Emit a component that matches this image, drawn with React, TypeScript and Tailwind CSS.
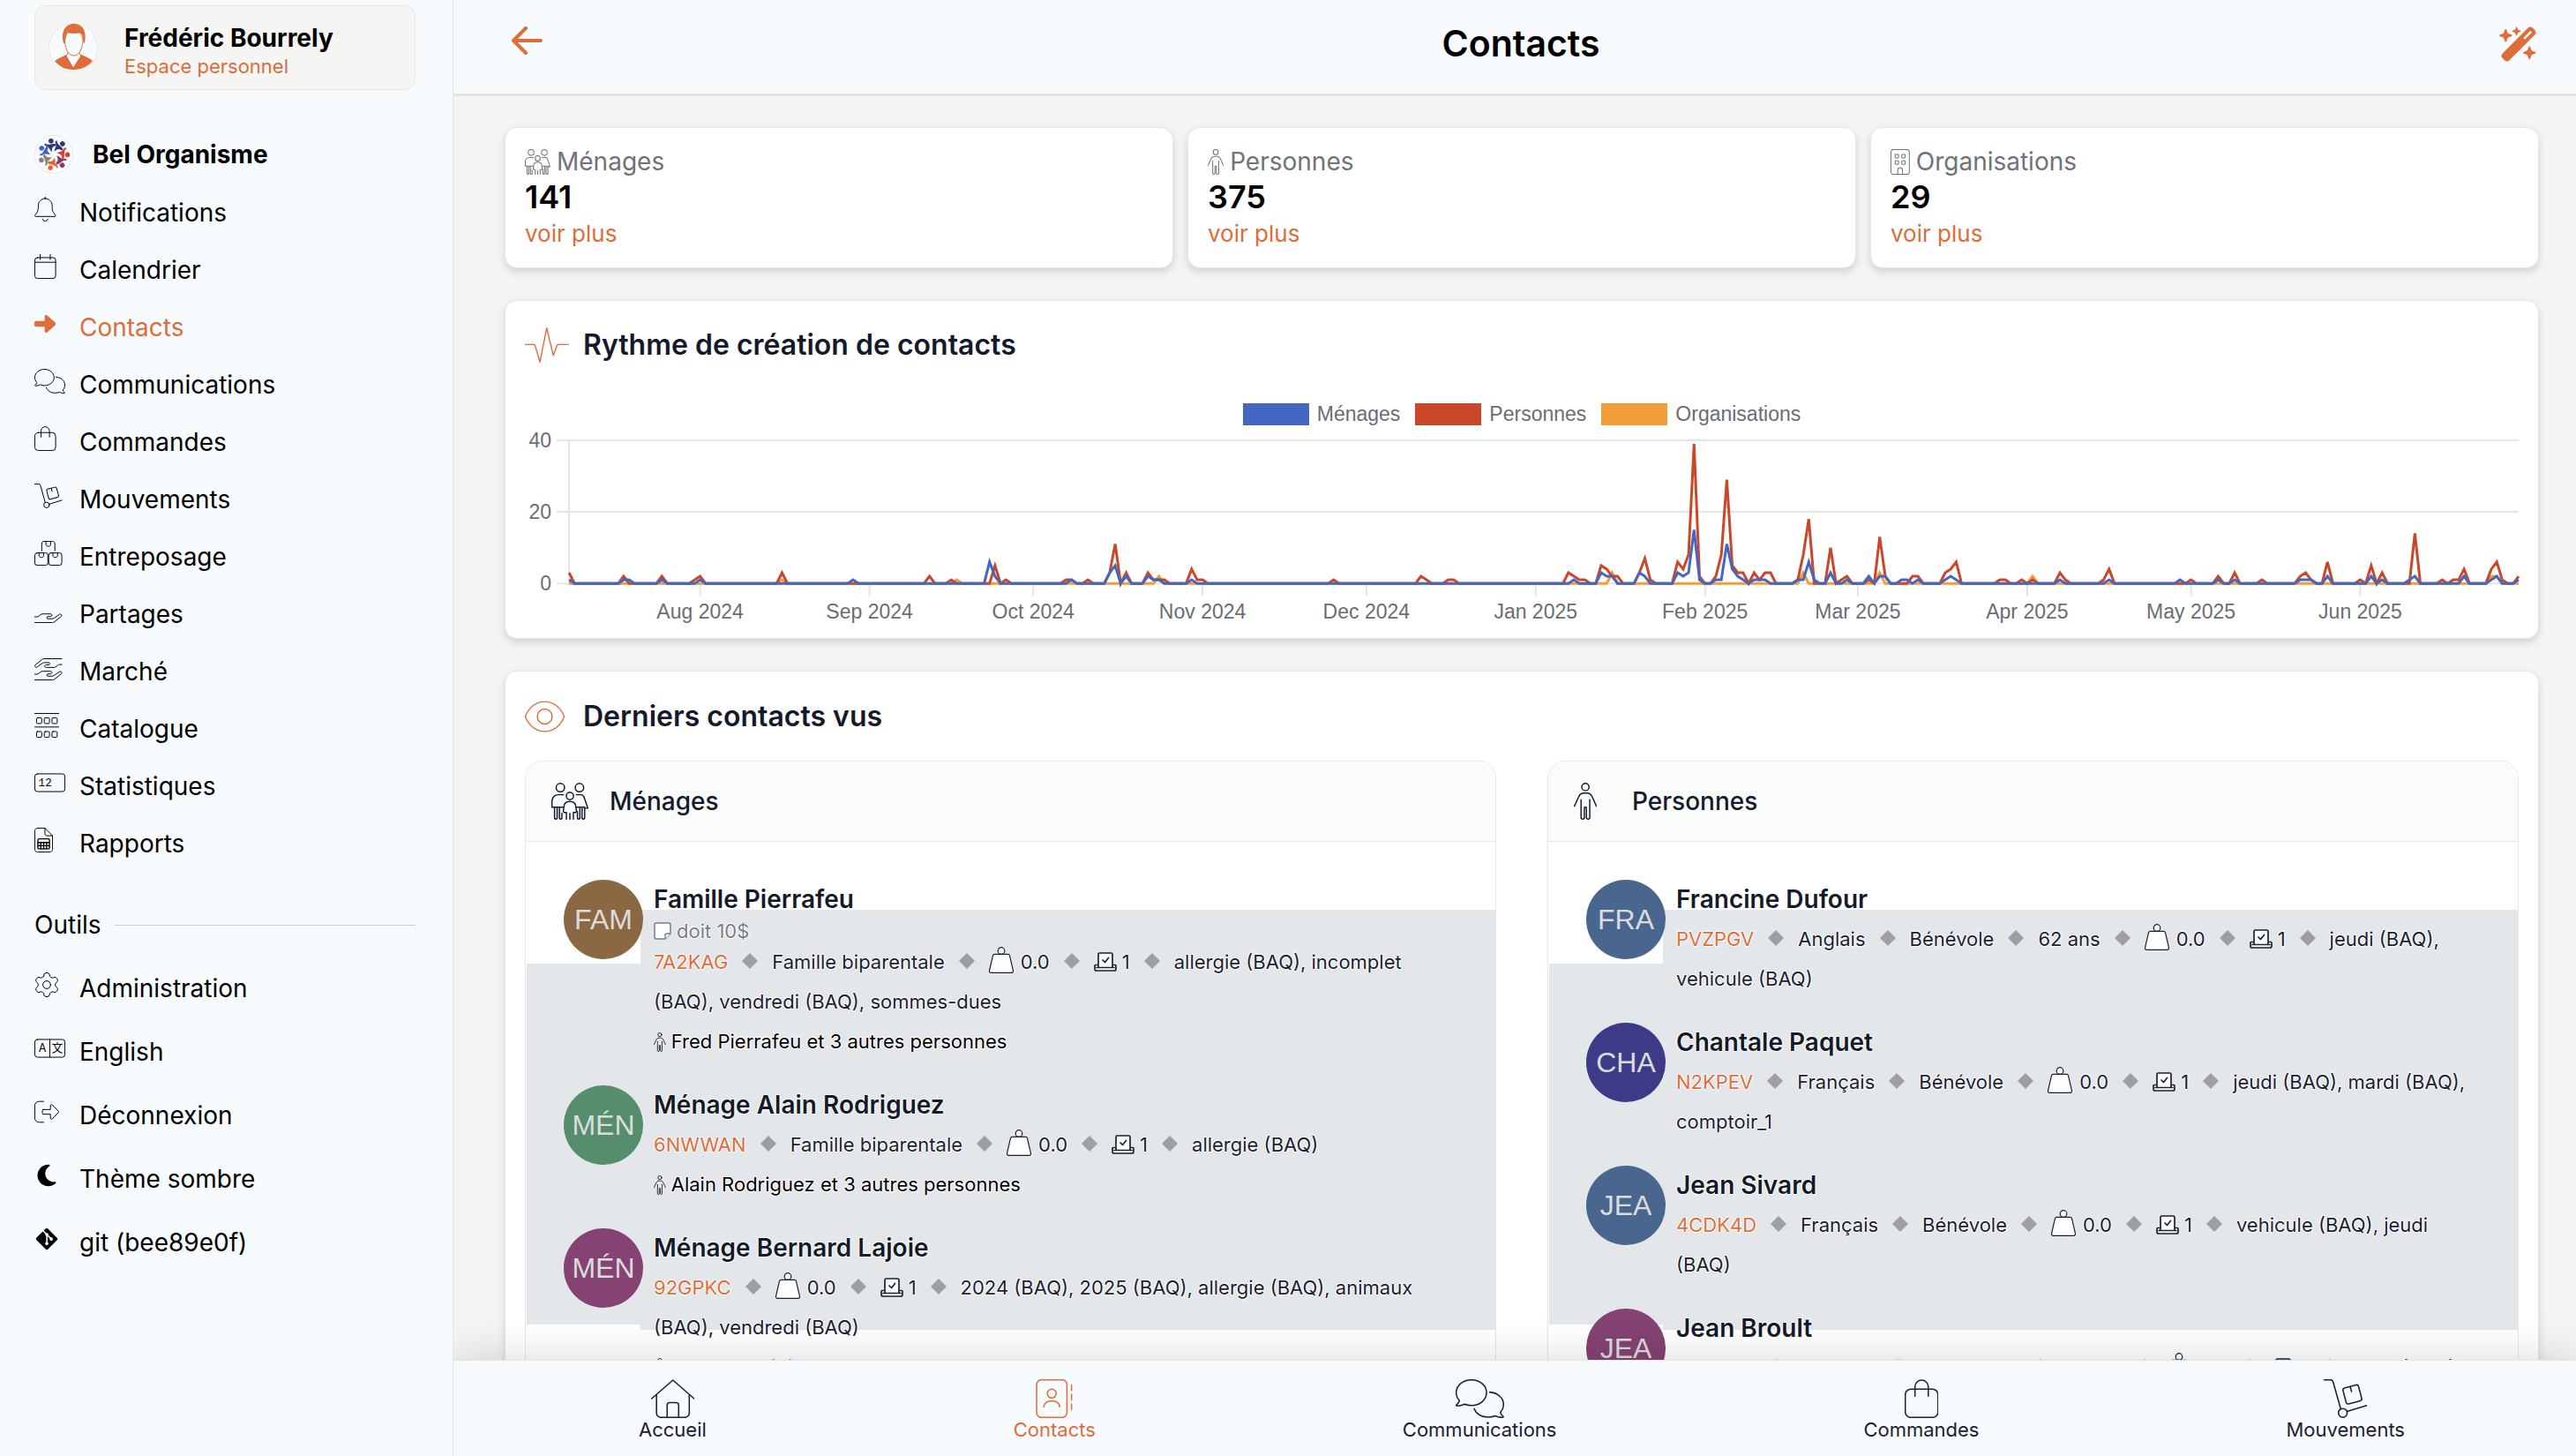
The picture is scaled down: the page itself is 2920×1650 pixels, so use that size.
import { Fragment, type ReactNode } from 'react';
import { FaGitAlt, FaMoon, FaWandMagicSparkles } from 'react-icons/fa6';

/* ---------- Icons: thin outlines on a 512 unit high grid ---------- */

type IconProps = { className?: string };

function Thin({ w, className, stroke = 18, children }: { w: number; className?: string; stroke?: number; children: ReactNode }) {
  return (
    <svg
      viewBox={`0 0 ${w} 512`}
      className={className}
      fill="none"
      stroke="currentColor"
      strokeWidth={stroke}
      strokeLinecap="round"
      strokeLinejoin="round"
      aria-hidden="true"
    >
      {children}
    </svg>
  );
}

const BellIcon = ({ className }: IconProps) => (
  <Thin w={448} className={className}>
    <path d="M224 8v28M224 36c-80 0-144 64-144 144v44c0 56-18 92-44 126l-24 32c-8 12-2 26 12 26h400c14 0 20-14 12-26l-24-32c-26-34-44-70-44-126v-44c0-80-64-144-144-144zM168 460c8 26 30 44 56 44s48-18 56-44" />
  </Thin>
);
const CalendarIcon = ({ className }: IconProps) => (
  <Thin w={448} className={className}>
    <rect x="8" y="72" width="432" height="432" rx="56" />
    <path d="M8 168h432M120 8v104M328 8v104" />
  </Thin>
);
const ArrowIcon = ({ className }: IconProps) => (
  <svg viewBox="0 0 448 512" className={className} fill="currentColor" aria-hidden="true">
    <path d="M36 198h176v-92c0-28 34-42 54-22l166 146c16 14 16 38 0 52L266 428c-20 20-54 6-54-22v-92H36c-20 0-36-16-36-36v-44c0-20 16-36 36-36z" />
  </svg>
);
const CommentsIcon = ({ className }: IconProps) => (
  <Thin w={640} className={className}>
    <path d="M208 8C98 8 8 84 8 178c0 40 16 76 42 104-6 26-20 42-36 54-8 8-4 16 6 16 42 0 76-12 100-24 28 12 58 18 88 18 110 0 200-74 200-168S318 8 208 8z" />
    <path d="M448 170c104 6 184 76 184 164 0 40-16 76-42 104 6 26 20 38 36 50 6 6 2 16-6 16-42 0-76-8-100-22-28 12-58 18-88 18-84 0-158-40-188-112" />
  </Thin>
);
const BagIcon = ({ className }: IconProps) => (
  <Thin w={448} className={className}>
    <rect x="8" y="132" width="432" height="372" rx="72" />
    <path d="M136 224V100a88 88 0 0 1 176 0v124" />
  </Thin>
);
const DollyIcon = ({ className }: IconProps) => (
  <Thin w={576} className={className}>
    <path d="M8 8h82c16 0 30 10 34 26l100 356M308 426l260-80" />
    <circle cx="252" cy="444" r="58" />
    <rect x="272" y="92" width="212" height="216" rx="28" transform="rotate(-15 378 200)" />
    <path d="m350 98 18 64" />
  </Thin>
);
const BoxesIcon = ({ className }: IconProps) => (
  <Thin w={576} className={className}>
    <path d="M152 208V56c0-26 22-48 48-48h176c26 0 48 22 48 48v152M240 8v66c0 20 16 36 36 36h24c20 0 36-16 36-36V8" />
    <rect x="8" y="248" width="272" height="256" rx="48" />
    <rect x="296" y="248" width="272" height="256" rx="48" />
    <path d="M96 248v56c0 20 16 36 36 36h24c20 0 36-16 36-36v-56M384 248v56c0 20 16 36 36 36h24c20 0 36-16 36-36v-56" />
  </Thin>
);
const HAND =
  'M8 384h44c14 0 26-4 36-14l32-26c14-12 32-20 52-20h160c18 0 32 12 32 26s-14 28-32 28h-60c-16 0-16 46 0 46h96c14 0 28-4 40-12l110-78c14-10 32-8 42 4s8 30-6 40L420 486c-12 10-28 18-44 18H8';
const HandIcon = ({ className }: IconProps) => (
  <Thin w={576} className={className}>
    <path d={HAND} />
  </Thin>
);
const HandsIcon = ({ className }: IconProps) => (
  <Thin w={576} className={className}>
    <path d={HAND} />
    <path d={HAND} transform="rotate(180 288 284)" />
  </Thin>
);
const ShelvesIcon = ({ className }: IconProps) => (
  <Thin w={512} className={className}>
    <path d="M8 10h496M8 290h496" />
    {[100, 384].map((y) => [44, 204, 364].map((x) => <rect key={`${x}-${y}`} x={x} y={y} width="108" height="118" rx="22" />))}
  </Thin>
);
const CounterIcon = ({ className }: IconProps) => (
  <Thin w={640} className={className}>
    <rect x="8" y="72" width="624" height="368" rx="56" />
    <text x="84" y="336" fontFamily="Liberation Mono, monospace" fontSize="230" fill="currentColor" stroke="none">
      12
    </text>
  </Thin>
);
const SheetIcon = ({ className }: IconProps) => (
  <Thin w={384} className={className}>
    <path d="M64 8h154l158 158v282c0 31-25 56-56 56H64c-31 0-56-25-56-56V64C8 33 33 8 64 8zM218 8v118c0 22 18 40 40 40h118" />
    <g strokeWidth="24">
      <rect x="72" y="232" width="240" height="206" rx="24" />
      <path d="M72 306h240M72 372h240M132 306v132M192 306v132M252 306v132" />
    </g>
  </Thin>
);

const gearPath = (() => {
  const at = (r: number, deg: number) => {
    const a = (deg * Math.PI) / 180;
    return `${Math.round(256 + r * Math.cos(a))} ${Math.round(256 + r * Math.sin(a))}`;
  };
  let d = '';
  for (let i = 0; i < 6; i++) {
    const c = -90 + i * 60;
    d += `${i ? 'L' : 'M'}${at(188, c - 20)}L${at(226, c - 14)}Q${at(250, c - 12)} ${at(248, c)}Q${at(250, c + 12)} ${at(226, c + 14)}L${at(188, c + 20)}Q${at(166, c + 30)} ${at(188, c + 40)}`;
  }
  return d + 'Z';
})();
const GearIcon = ({ className }: IconProps) => (
  <Thin w={512} className={className}>
    <path d={gearPath} />
    <circle cx="256" cy="256" r="80" />
  </Thin>
);
const LanguageIcon = ({ className }: IconProps) => (
  <Thin w={640} className={className}>
    <rect x="8" y="72" width="624" height="368" rx="56" />
    <path d="M320 72v368" />
    <g fill="currentColor" stroke="none" fontSize="230" textAnchor="middle">
      <text x="164" y="338" fontFamily="Inter, sans-serif">
        A
      </text>
      <text x="478" y="338" fontFamily="'Noto Sans CJK JP', sans-serif">
        文
      </text>
    </g>
  </Thin>
);
const LogoutIcon = ({ className }: IconProps) => (
  <Thin w={512} className={className}>
    <path d="M192 40H96c-49 0-88 39-88 88v256c0 49 39 88 88 88h96M184 208h148v-82c0-20 22-28 36-16l128 130c10 10 10 22 0 32L368 402c-14 12-36 4-36-16v-82H184c-10 0-18-8-18-18v-60c0-10 8-18 18-18z" />
  </Thin>
);
const HomeIcon = ({ className }: IconProps) => (
  <Thin w={576} className={className}>
    <path d="M8 256 288 12l280 244M72 204v240c0 33 27 60 60 60h312c33 0 60-27 60-60V204M212 504V340c0-18 14-32 32-32h88c18 0 32 14 32 32v164" />
  </Thin>
);
const ContactBookIcon = ({ className }: IconProps) => (
  <Thin w={512} className={className}>
    <rect x="24" y="8" width="400" height="496" rx="64" />
    <path d="M484 76v72M484 202v72M484 328v72M120 366c0-44 36-78 80-78h48c44 0 80 34 80 78" />
    <circle cx="224" cy="190" r="58" />
  </Thin>
);
const FamilyIcon = ({ className }: IconProps) => (
  <Thin w={512} className={className}>
    <circle cx="124" cy="68" r="58" />
    <circle cx="388" cy="68" r="58" />
    <circle cx="256" cy="184" r="50" />
    <path d="M168 166H92c-46 0-84 38-84 90v82h158M344 166h62c22 0 40 14 46 36l52 150h-44M346 338h114" />
    <path d="M44 340v150c0 16 36 16 36 0V340M112 340v150c0 16 34 16 34 0v-70M460 352v138c0 16-36 16-36 0V352M394 352v138c0 16-34 16-34 0v-90" />
    <path d="M208 504v-92h-20c-14 0-24-12-22-26l8-60c4-40 36-66 82-66s78 26 82 66l8 60c2 14-8 26-22 26h-20v92M256 504v-80" />
  </Thin>
);
const PersonIcon = ({ className }: IconProps) => (
  <Thin w={320} className={className}>
    <circle cx="160" cy="60" r="50" />
    <path d="m8 324 54-120c16-38 42-60 80-60h36c38 0 64 22 80 60l54 120M100 236v246c0 26 46 26 46 0V346c0-16 28-16 28 0v136c0 26 46 26 46 0V236" />
  </Thin>
);
const BuildingIcon = ({ className }: IconProps) => (
  <Thin w={384} className={className}>
    <rect x="8" y="8" width="368" height="496" rx="56" />
    {[104, 232].map((y) => [92, 224].map((x) => <rect key={`${x}-${y}`} x={x} y={y} width="68" height="72" rx="14" />))}
    <path d="M144 504v-84a48 48 0 0 1 96 0v84" />
  </Thin>
);
const NoteIcon = ({ className }: IconProps) => (
  <svg viewBox="0 0 20 20" className={className} fill="white" stroke="currentColor" strokeWidth="1.500" strokeLinejoin="round" aria-hidden="true">
    <path d="M3 1h14a2 2 0 0 1 2 2v10l-6 6H3a2 2 0 0 1-2-2V3a2 2 0 0 1 2-2z" />
    <path d="M13 19v-4a2 2 0 0 1 2-2h4" />
  </svg>
);
const PulseIcon = ({ className }: IconProps) => (
  <Thin w={640} className={className}>
    <path d="M8 248h116c12 0 22 8 26 20l68 236L316 8l96 400 54-146c4-8 12-14 22-14h144" />
  </Thin>
);
const EyeIcon = ({ className }: IconProps) => (
  <Thin w={576} className={className}>
    <path d="M10 244C62 122 164 40 288 40s226 82 278 204c4 8 4 16 0 24-52 122-154 204-278 204S62 390 10 268c-4-8-4-16 0-24z" />
    <circle cx="288" cy="256" r="108" />
  </Thin>
);
const BackIcon = ({ className }: IconProps) => (
  <svg viewBox="0 0 36 32" className={className} fill="none" stroke="currentColor" strokeWidth="4" strokeLinecap="round" strokeLinejoin="round" aria-hidden="true">
    <path d="M17 2 3 16l14 14M3 16h31" />
  </svg>
);
const WeightIcon = () => (
  <svg viewBox="0 0 28 30" className="mr-2 inline h-[30px] w-7 align-[-5px]" fill="white" stroke="currentColor" strokeWidth="1.200" strokeLinejoin="round" aria-hidden="true">
    <circle cx="14" cy="4.500" r="3.800" />
    <path d="M6.500 8.300h15c1 0 1.800.6 2 1.500l4 17.200c.2 1.200-.6 2.300-1.800 2.300H2.300C1.100 29.300.3 28.200.5 27L4.500 9.800c.2-.9 1-1.500 2-1.500z" />
  </svg>
);
const BallotIcon = () => (
  <svg viewBox="0 0 26 22" className="mr-[6px] inline h-[22px] w-[26px] align-[-3px]" fill="white" stroke="currentColor" strokeWidth="1.700" strokeLinecap="round" strokeLinejoin="round" aria-hidden="true">
    <path d="M3.500 14.500H2a1 1 0 0 0-1 1V19a2 2 0 0 0 2 2h20a2 2 0 0 0 2-2v-3.500a1 1 0 0 0-1-1h-1.500" />
    <path d="M5 17.500V2.500A1.500 1.500 0 0 1 6.500 1h13A1.500 1.500 0 0 1 21 2.500v15zM3 17.500h20" />
    <path d="m10 9 2.500 2.500L16.500 6.500" />
  </svg>
);

function UserPortrait() {
  return (
    <svg viewBox="0 0 56 56" className="size-14 shrink-0" aria-hidden="true">
      <circle cx="28" cy="28" r="27.500" fill="#f8fbfe" stroke="#e5e7eb" />
      <path d="M7 43c4-3 9-5 13-7l8 14 9-14c5 2 10 4 13 7-5 6-12 10-22 10S12 49 7 43z" fill="#de6d3a" />
      <path d="M20 36l8 14 9-14-2-2v-4H22v4z" fill="#f8fbfe" />
      <path d="M22 31v4l-2 2M35 31v4l2 2" fill="none" stroke="#de6d3a" />
      <path d="M18.500 19c0 9 3.500 18 10 18S39 28 39 19l-2-8H21z" fill="#f8fbfe" stroke="#de6d3a" />
      <path d="M17 23c-3-12 1-22 11.500-22 11 0 15 9 12.500 22l-1.500-1-.7-8c-1.800-1.800-3.300-3-5.300-3-3 1.500-9 1-12-.5-1.500 2-2.500 5-2.500 8.500V23z" fill="#de6d3a" />
    </svg>
  );
}

const FIGURES = ['#2f3580', '#2e3472', '#d8402c', '#8c3568', '#e9662d', '#8a8480', '#3a62d0'];
function OrgLogo() {
  return (
    <svg viewBox="0 0 44 44" className="size-11 shrink-0" aria-hidden="true">
      <circle cx="22" cy="22" r="21.500" fill="#fcfdfe" stroke="#e5e7eb" />
      {FIGURES.map((color, i) => (
        <g key={color} transform={`rotate(${Math.round((i * 360) / 7) - 8} 22 22)`} fill={color}>
          <circle cx="21" cy="6.500" r="2.800" />
          <path d="M14 8c2 3 5 2 9 2 4 0 4 2 1 3-3 0-3 3-4 6-2-3-2-6-4-7s-4-2-2-4z" />
        </g>
      ))}
    </svg>
  );
}

/* ---------- Sidebar ---------- */

type NavEntry = { label: string; icon: ReactNode; active?: boolean };

const ICON = 'h-7 w-auto';

const MENU: NavEntry[] = [
  { label: 'Notifications', icon: <BellIcon className={ICON} /> },
  { label: 'Calendrier', icon: <CalendarIcon className={ICON} /> },
  { label: 'Contacts', icon: <ArrowIcon className={ICON} />, active: true },
  { label: 'Communications', icon: <CommentsIcon className={ICON} /> },
  { label: 'Commandes', icon: <BagIcon className={ICON} /> },
  { label: 'Mouvements', icon: <DollyIcon className={ICON} /> },
  { label: 'Entreposage', icon: <BoxesIcon className={ICON} /> },
  { label: 'Partages', icon: <HandIcon className={ICON} /> },
  { label: 'Marché', icon: <HandsIcon className={ICON} /> },
  { label: 'Catalogue', icon: <ShelvesIcon className={ICON} /> },
  { label: 'Statistiques', icon: <CounterIcon className={ICON} /> },
  { label: 'Rapports', icon: <SheetIcon className={ICON} /> },
];

const TOOLS: NavEntry[] = [
  { label: 'Administration', icon: <GearIcon className={ICON} /> },
  { label: 'English', icon: <LanguageIcon className={ICON} /> },
  { label: 'Déconnexion', icon: <LogoutIcon className={ICON} /> },
  { label: 'Thème sombre', icon: <FaMoon className={ICON} /> },
  { label: 'git (bee89e0f)', icon: <FaGitAlt className={ICON} /> },
];

function SidebarLink({ entry, tall }: { entry: NavEntry; tall?: boolean }) {
  return (
    <li>
      <a href="#" className={`flex items-center ${tall ? 'h-[72px]' : 'h-[65px]'} ${entry.active ? 'text-[#de6d3a]' : 'text-black'}`}>
        <span className="mb-2 flex w-[51px] shrink-0">{entry.icon}</span>
        {entry.label}
      </a>
    </li>
  );
}

function Sidebar() {
  return (
    <aside className="flex w-[514px] shrink-0 flex-col border-r border-[#e2e6ea] bg-[#f7fbfe] pr-[42px] pl-[39px] text-[28px] leading-9 text-black">
      <a href="#" className="mt-[6px] flex h-24 items-center gap-[30px] rounded-xl border border-[#e5e7eb] bg-[#f5f5f4] pl-[15px]">
        <UserPortrait />
        <span className="flex flex-col pt-[6px]">
          <span className="font-bold">Frédéric Bourrely</span>
          <span className="text-[22px] leading-7 text-[#de6d3a]">Espace personnel</span>
        </span>
      </a>
      <a href="#" className="mt-[40px] flex h-[65px] items-center gap-[22px] font-bold">
        <OrgLogo />
        Bel Organisme
      </a>
      <nav aria-label="Menu">
        <ul className="mt-px">
          {MENU.map((entry) => (
            <SidebarLink key={entry.label} entry={entry} />
          ))}
        </ul>
        <h2 className="mt-[42px] flex items-center gap-4">
          Outils
          <span className="h-px grow bg-[#ccd1d4]" />
        </h2>
        <ul className="mt-[18px]">
          {TOOLS.map((entry) => (
            <SidebarLink key={entry.label} entry={entry} tall />
          ))}
        </ul>
      </nav>
    </aside>
  );
}

/* ---------- Statistic cards ---------- */

const CARD = 'rounded-[14px] border border-[#e5e7eb] bg-white shadow-[0_4px_8px_rgba(0,0,0,0.14)]';

const STATS = [
  { label: 'Ménages', value: '141', icon: <FamilyIcon className="h-[29px] w-auto" /> },
  { label: 'Personnes', value: '375', icon: <PersonIcon className="h-[29px] w-auto" /> },
  { label: 'Organisations', value: '29', icon: <BuildingIcon className="h-[29px] w-auto" /> },
];

function StatCards() {
  return (
    <div className="grid grid-cols-3 gap-4">
      {STATS.map((s) => (
        <section key={s.label} className={`${CARD} px-[22px] pt-[18px] pb-4`}>
          <h2 className="flex items-center gap-[7px] text-[28px] leading-10 text-[#6f7279]">
            {s.icon}
            {s.label}
          </h2>
          <p className="text-[36px] leading-10 font-semibold text-black">{s.value}</p>
          <a href="#" className="text-[26px] leading-[44px] text-[#de6d3a]">
            voir plus
          </a>
        </section>
      ))}
    </div>
  );
}

/* ---------- Line chart ---------- */

const DAYS = 357;
type Points = Record<number, number>;

const ORGS: Points = { 39: 1, 71: 1, 108: 2, 191: 3, 226: 3, 240: 3, 268: 2, 352: 2, 353: 2 };
const PEOPLE: Points = {
  0: 3, 10: 2, 17: 2, 23: 1, 24: 2, 39: 3, 66: 2, 70: 1, 78: 5, 80: 1, 91: 1, 92: 1, 95: 1, 99: 3, 100: 11, 102: 3,
  106: 3, 107: 1, 108: 1, 109: 1, 114: 4, 115: 1, 116: 1, 140: 1, 156: 2, 157: 1, 161: 1, 162: 1, 183: 3, 184: 2, 185: 1, 186: 1,
  189: 5, 190: 4, 191: 2, 192: 2, 196: 3, 197: 7, 198: 1, 203: 6, 204: 4, 205: 8, 206: 39, 207: 2, 210: 2, 211: 8, 212: 29,
  213: 5, 214: 3, 215: 3, 217: 3, 218: 1, 219: 3, 220: 3, 225: 1, 226: 8, 227: 18, 231: 10, 233: 1, 234: 2, 238: 1, 240: 13,
  241: 2, 246: 2, 247: 2, 252: 3, 253: 4, 254: 6, 262: 1, 263: 1, 266: 1, 268: 1, 273: 3, 274: 1, 281: 1, 282: 4, 297: 1,
  302: 2, 305: 3, 310: 1, 317: 2, 318: 3, 319: 1, 322: 6, 328: 1, 330: 5, 332: 3, 338: 14, 343: 1, 345: 1, 346: 1, 347: 4,
  352: 4, 353: 6, 354: 1, 357: 2,
};
const HOUSEHOLDS: Points = {
  0: 1, 10: 1, 11: 1, 17: 1, 24: 1, 52: 1, 77: 6, 78: 2, 92: 1, 99: 3, 100: 5, 102: 2, 106: 2, 107: 1, 108: 1, 114: 1,
  184: 1, 189: 3, 190: 2, 191: 2, 196: 3, 197: 2, 203: 3, 204: 2, 205: 3, 206: 15, 207: 1, 210: 1, 211: 1, 212: 11, 213: 4, 214: 2,
  215: 1, 217: 1, 218: 1, 219: 1, 225: 1, 226: 1, 227: 6, 228: 1, 231: 3, 234: 1, 238: 2, 240: 2, 241: 2, 244: 1, 245: 1,
  247: 1, 252: 1, 253: 2, 254: 1, 273: 1, 282: 1, 295: 1, 302: 1, 305: 1, 317: 1, 318: 1, 319: 1, 322: 2, 330: 2, 332: 1,
  337: 1, 338: 2, 347: 2, 352: 1, 353: 2, 357: 1,
};

const SERIES = [
  { label: 'Ménages', color: '#4467c4', swatch: 'bg-[#4467c4]', data: HOUSEHOLDS },
  { label: 'Personnes', color: '#ca472a', swatch: 'bg-[#ca472a]', data: PEOPLE },
  { label: 'Organisations', color: '#f29d38', swatch: 'bg-[#f29d38]', data: ORGS },
];

const MONTHS: [number, string][] = [
  [24, 'Aug 2024'], [55, 'Sep 2024'], [85, 'Oct 2024'], [116, 'Nov 2024'], [146, 'Dec 2024'], [177, 'Jan 2025'],
  [208, 'Feb 2025'], [236, 'Mar 2025'], [267, 'Apr 2025'], [297, 'May 2025'], [328, 'Jun 2025'],
];

const LEFT = 50;
const RIGHT = 2258;
const px = (day: number) => Math.round((LEFT + (day * (RIGHT - LEFT)) / DAYS) * 10) / 10;
const py = (value: number) => 171 - (value * 162) / 40;

function linePoints(data: Points) {
  const pts: string[] = [];
  for (let d = 0; d <= DAYS; d++) pts.push(`${px(d)},${py(data[d] ?? 0)}`);
  return pts.join(' ');
}

function CreationChart() {
  return (
    <section className={`${CARD} px-[22px] pt-[30px] pb-[13px]`}>
      <SectionTitle icon={<PulseIcon className="h-10 w-auto" />}>Rythme de création de contacts</SectionTitle>
      <ul className="mt-[46px] flex justify-center gap-[17px] font-['Liberation_Sans',sans-serif] text-[23px] leading-[25px] text-[#6b6d72]">
        {SERIES.map((s) => (
          <li key={s.label} className="flex gap-[9px]">
            <span className={`h-[25px] w-[75px] ${s.swatch}`} />
            {s.label}
          </li>
        ))}
      </ul>
      <svg viewBox="0 0 2258 220" className="mt-2 block h-auto w-full overflow-visible" role="img" aria-label="Rythme de création de contacts">
        <g stroke="#e5e5e5" strokeWidth="2">
          {[0, 20, 40].map((v) => (
            <line key={v} x1="36" x2={RIGHT} y1={py(v)} y2={py(v)} />
          ))}
          <line x1={LEFT} x2={LEFT} y1={py(40)} y2={py(0)} />
          {MONTHS.map(([d]) => (
            <line key={d} x1={px(d)} x2={px(d)} y1={py(0)} y2="185" />
          ))}
        </g>
        <g fill="#6b6d72" fontFamily="Liberation Sans, Arial, sans-serif" fontSize="23">
          {[0, 20, 40].map((v) => (
            <text key={v} x="30" y={py(v) + 8} textAnchor="end">
              {v}
            </text>
          ))}
          {MONTHS.map(([d, label]) => (
            <text key={d} x={px(d)} y="211" textAnchor="middle">
              {label}
            </text>
          ))}
        </g>
        {[...SERIES].reverse().map((s) => (
          <polyline key={s.label} points={linePoints(s.data)} fill="none" stroke={s.color} strokeWidth="3" strokeLinejoin="miter" />
        ))}
      </svg>
    </section>
  );
}

function SectionTitle({ icon, children }: { icon: ReactNode; children: ReactNode }) {
  return (
    <h2 className="flex h-10 items-center text-[32px] font-semibold text-[#141a2a]">
      <span className="flex w-[66px] text-[#de6d3a]">{icon}</span>
      {children}
    </h2>
  );
}

/* ---------- Recently viewed contacts ---------- */

type Contact = {
  initials: string;
  color: string;
  name: string;
  note?: string;
  code: string;
  details: string[];
  tags: string;
  members?: string;
};

const FAMILIES: Contact[] = [
  { initials: 'FAM', color: 'bg-[#8a6844]', name: 'Famille Pierrafeu', note: 'doit 10$', code: '7A2KAG', details: ['Famille biparentale'], tags: 'allergie (BAQ), incomplet (BAQ), vendredi (BAQ), sommes-dues', members: 'Fred Pierrafeu et 3 autres personnes' },
  { initials: 'MÉN', color: 'bg-[#568d6c]', name: 'Ménage Alain Rodriguez', code: '6NWWAN', details: ['Famille biparentale'], tags: 'allergie (BAQ)', members: 'Alain Rodriguez et 3 autres personnes' },
  { initials: 'MÉN', color: 'bg-[#844373]', name: 'Ménage Bernard Lajoie', code: '92GPKC', details: [], tags: '2024 (BAQ), 2025 (BAQ), allergie (BAQ), animaux (BAQ), vendredi (BAQ)', members: 'Bernard Lajoie et 3 autres personnes' },
];

const PEOPLE_SEEN: Contact[] = [
  { initials: 'FRA', color: 'bg-[#48668e]', name: 'Francine Dufour', code: 'PVZPGV', details: ['Anglais', 'Bénévole', '62 ans'], tags: 'jeudi (BAQ), vehicule (BAQ)' },
  { initials: 'CHA', color: 'bg-[#3d3b87]', name: 'Chantale Paquet', code: 'N2KPEV', details: ['Français', 'Bénévole'], tags: 'jeudi (BAQ), mardi (BAQ), comptoir_1' },
  { initials: 'JEA', color: 'bg-[#48668e]', name: 'Jean Sivard', code: '4CDK4D', details: ['Français', 'Bénévole'], tags: 'vehicule (BAQ), jeudi (BAQ)' },
  { initials: 'JEA', color: 'bg-[#844373]', name: 'Jean Broult', code: '4NKPED', details: ['Français', 'Participant', 'Adulte'], tags: 'jeudi (BAQ)' },
];

const Separator = () => (
  <svg viewBox="0 0 18 18" className="mx-4 inline size-[18px] align-baseline" aria-hidden="true">
    <path d="M9 0 18 9 9 18 0 9z" fill="#9e9fa1" />
  </svg>
);

function ContactRow({ contact }: { contact: Contact }) {
  return (
    <li className="flex gap-3 pb-[27px] text-[22px] leading-[45px] text-[#1b2130]">
      <span className={`flex size-[90px] shrink-0 items-center justify-center rounded-full font-['Liberation_Sans',sans-serif] text-[32px] text-[#dcdcdc] ${contact.color}`}>
        {contact.initials}
      </span>
      <div className="min-w-0 grow [text-shadow:1px_0_white,-1px_0_white,0_1px_white,0_-1px_white]">
        <h4 className="text-[28px] font-semibold text-[#141a2a]">{contact.name}</h4>
        {contact.note && (
          <p className="flex items-center gap-[6px] leading-[26px] text-[#7a7d83]">
            <NoteIcon className="size-5" />
            {contact.note}
          </p>
        )}
        <p>
          <a href="#" className="text-[#de6d3a]">
            {contact.code}
          </a>
          {contact.details.map((d) => (
            <Fragment key={d}>
              <Separator />
              {d}
            </Fragment>
          ))}
          <Separator />
          <WeightIcon />
          0.0
          <Separator />
          <BallotIcon />1
          <Separator />
          {contact.tags}
        </p>
        {contact.members && (
          <p className="flex items-center gap-[6px] text-black">
            <PersonIcon className="h-[22px] w-auto" />
            {contact.members}
          </p>
        )}
      </div>
    </li>
  );
}

function ContactPanel({ title, icon, contacts }: { title: string; icon: ReactNode; contacts: Contact[] }) {
  return (
    <section className="overflow-hidden rounded-t-[20px] border border-[#e5e7eb]">
      <h3 className="flex h-[91px] items-center border-b border-[#e5e7eb] bg-[#fafcfc] pl-[29px] text-[28px] font-medium text-[#141a2a]">
        <span className="flex w-[66px]">{icon}</span>
        {title}
      </h3>
      <div className="relative isolate">
        <div aria-hidden="true" className="absolute top-[138px] right-0 left-px -z-10 h-[409px] bg-[#e4e7ea]" />
        <div aria-hidden="true" className="absolute top-[77px] right-0 left-[130px] -z-10 h-[476px] bg-[#e4e7ea]" />
        <ul className="pt-[43px] pr-[52px] pl-[43px]">
          {contacts.map((c) => (
            <ContactRow key={c.name} contact={c} />
          ))}
        </ul>
      </div>
    </section>
  );
}

/* ---------- Bottom bar ---------- */

const TAB_ICON = 'h-11 w-auto';
const TABS: NavEntry[] = [
  { label: 'Accueil', icon: <HomeIcon className={TAB_ICON} /> },
  { label: 'Contacts', icon: <ContactBookIcon className={TAB_ICON} />, active: true },
  { label: 'Communications', icon: <CommentsIcon className={TAB_ICON} /> },
  { label: 'Commandes', icon: <BagIcon className={TAB_ICON} /> },
  { label: 'Mouvements', icon: <DollyIcon className={TAB_ICON} /> },
];

function BottomBar() {
  return (
    <nav
      aria-label="Raccourcis"
      className="relative z-10 flex h-[109px] shrink-0 justify-around border-t border-[#dfe4e8] bg-[#f7fbfe] pt-[21px] pr-5 pl-9 shadow-[0_0_50px_rgba(0,0,0,0.16)]"
    >
      {TABS.map((tab) => (
        <a key={tab.label} href="#" className={`flex flex-col items-center text-[22px] leading-[26px] ${tab.active ? 'text-[#de6d3a]' : 'text-[#1b2130]'}`}>
          {tab.icon}
          {tab.label}
        </a>
      ))}
    </nav>
  );
}

export default function App() {
  return (
    <div className="flex h-screen overflow-hidden bg-[#f4f4f3] font-[Inter,sans-serif]">
      <Sidebar />
      <div className="flex min-w-0 grow flex-col overflow-hidden">
        <header className="relative z-10 flex h-[107px] shrink-0 items-center justify-between border-b border-[#e2e8ec] bg-[#f7fbfe] pr-[43px] pb-[6px] pl-[65px] text-[#de6d3a] shadow-sm">
          <button type="button" aria-label="Retour" className="pb-2">
            <BackIcon className="h-8 w-9" />
          </button>
          <h1 className="text-[41px] font-semibold text-black">Contacts</h1>
          <button type="button" aria-label="Actions">
            <FaWandMagicSparkles className="size-11" />
          </button>
        </header>
        <main className="flex min-h-0 grow flex-col gap-9 overflow-hidden pt-[37px] pr-[42px] pl-[58px] *:shrink-0">
          <StatCards />
          <CreationChart />
          <section className={`${CARD} px-[22px] pt-[31px]`}>
            <SectionTitle icon={<EyeIcon className="h-10 w-auto" />}>Derniers contacts vus</SectionTitle>
            <div className="mt-[30px] grid grid-cols-2 gap-[58px]">
              <ContactPanel title="Ménages" icon={<FamilyIcon className="h-[42px] w-auto" />} contacts={FAMILIES} />
              <ContactPanel title="Personnes" icon={<PersonIcon className="h-[42px] w-auto" />} contacts={PEOPLE_SEEN} />
            </div>
          </section>
        </main>
        <BottomBar />
      </div>
    </div>
  );
}
